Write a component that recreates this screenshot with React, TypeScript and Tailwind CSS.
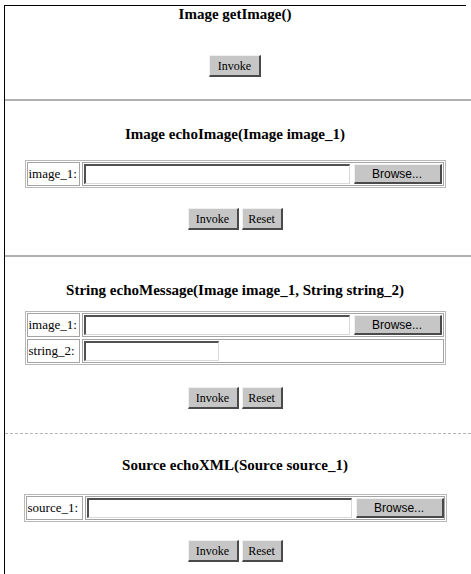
import React from "react";

const btn =
  "flex items-center justify-center h-[22px] bg-[#c6c6c6] border-t border-l border-t-[#f0f0f0] border-l-[#f0f0f0] border-r-2 border-b-2 border-r-[#4a4a4a] border-b-[#4a4a4a] text-[12px] text-black font-['Liberation_Serif',serif] leading-none";

function Btn({ label, w }: { label: string; w: string }) {
  return (
    <button type="button" className={`${btn} ${w}`}>
      {label}
    </button>
  );
}

function Title({ text, mt }: { text: string; mt: string }) {
  return (
    <div className={`${mt} h-[17px] text-center text-[15px] font-bold leading-[17px] text-black whitespace-nowrap`}>
      {text}
    </div>
  );
}

function TextInput({ w }: { w: string }) {
  return (
    <div
      className={`${w} h-[20px] bg-white border-t-2 border-l-2 border-t-[#505050] border-l-[#505050] border-r border-b border-r-[#d8d8d8] border-b-[#d8d8d8]`}
    />
  );
}

function FileRow({ label, labelW, cellW }: { label: string; labelW: string; cellW: string }) {
  return (
    <div className="flex gap-[2px]">
      <div className={`${labelW} h-[24px] border border-[#a4a4a4] flex items-center pl-[1px] text-[13px] text-black whitespace-nowrap`}>
        {label}
      </div>
      <div className={`${cellW} h-[24px] border border-[#a4a4a4] flex items-center pl-[1px] gap-[4px]`}>
        <TextInput w="w-[266px]" />
        <button
          type="button"
          className="flex items-center justify-center w-[88px] h-[20px] bg-[#c6c6c6] border-t border-l border-t-[#f0f0f0] border-l-[#f0f0f0] border-r-2 border-b-2 border-r-[#4a4a4a] border-b-[#4a4a4a] text-[12px] text-black font-['Liberation_Sans',Arial,sans-serif] leading-none"
        >
          Browse...
        </button>
      </div>
    </div>
  );
}

function TextRow({ label, labelW, cellW }: { label: string; labelW: string; cellW: string }) {
  return (
    <div className="flex gap-[2px]">
      <div className={`${labelW} h-[24px] border border-[#a4a4a4] flex items-center pl-[1px] text-[13px] text-black whitespace-nowrap`}>
        {label}
      </div>
      <div className={`${cellW} h-[24px] border border-[#a4a4a4] flex items-center pl-[1px]`}>
        <TextInput w="w-[135px]" />
      </div>
    </div>
  );
}

function Buttons({ mt }: { mt: string }) {
  return (
    <div className={`${mt} flex gap-[3px]`}>
      <Btn label="Invoke" w="w-[51px]" />
      <Btn label="Reset" w="w-[41px]" />
    </div>
  );
}

export default function App() {
  return (
    <div className="min-h-screen bg-white font-['Liberation_Serif',serif] text-black">
      <div className="ml-[4px] mt-[5px] w-[467px] min-h-[569px] border-l border-black">
        <div className="w-[461px] border-t border-black" />

        {/* Section 1 */}
        <div className="w-[460px] flex flex-col items-center">
          <Title text="Image getImage()" mt="mt-0" />
          <div className="mt-[32px]">
            <Btn label="Invoke" w="w-[52px]" />
          </div>
        </div>
        <div className="mt-[22px] w-[466px] h-[2px] bg-[#b0b0b0]" />

        {/* Section 2 */}
        <div className="w-[460px] flex flex-col items-center">
          <Title text="Image echoImage(Image image_1)" mt="mt-[25px]" />
          <div className="mt-[17px] border border-[#b8b8b8] p-[1px] flex flex-col gap-[2px]">
            <FileRow label="image_1:" labelW="w-[53px]" cellW="w-[362px]" />
          </div>
          <Buttons mt="mt-[20px]" />
        </div>
        <div className="mt-[25px] w-[466px] h-[2px] bg-[#b0b0b0]" />

        {/* Section 3 */}
        <div className="w-[460px] flex flex-col items-center">
          <Title text="String echoMessage(Image image_1, String string_2)" mt="mt-[25px]" />
          <div className="mt-[12px] border border-[#b8b8b8] p-[1px] flex flex-col gap-[2px]">
            <FileRow label="image_1:" labelW="w-[53px]" cellW="w-[362px]" />
            <TextRow label="string_2:" labelW="w-[53px]" cellW="w-[362px]" />
          </div>
          <Buttons mt="mt-[22px]" />
        </div>
        <div className="mt-[24px] w-[466px] border-t border-dashed border-[#b4b4b4]" />

        {/* Section 4 */}
        <div className="w-[460px] flex flex-col items-center">
          <Title text="Source echoXML(Source source_1)" mt="mt-[23px]" />
          <div className="mt-[20px] border border-[#b8b8b8] p-[1px] flex flex-col gap-[2px]">
            <FileRow label="source_1:" labelW="w-[57px]" cellW="w-[360px]" />
          </div>
          <Buttons mt="mt-[18px]" />
        </div>
      </div>
    </div>
  );
}
